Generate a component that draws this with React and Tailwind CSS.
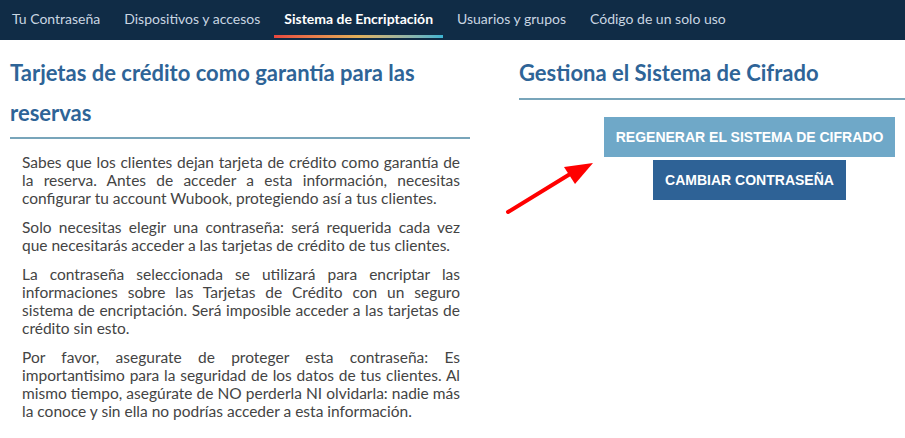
export default function App() {
    const tabs = ["Tu Contraseña", "Dispositivos y accesos", "Sistema de Encriptación", "Usuarios y grupos", "Código de un solo uso"];

    return (
        <div className="w-[905px] h-[438px] bg-white overflow-hidden font-['Lato',sans-serif]">
            {/* tabs */}
            <nav className="h-10 bg-[#102c46] flex items-stretch">
                {tabs.map((tab) => (
                    <div key={tab} className="relative px-[10px] mx-[2px] pb-[3px] flex items-center">
                        <span className={tab === "Sistema de Encriptación" ? "text-[14px] text-white font-bold" : "text-[14px] text-[#c9d6e2]"}>
                            {tab}
                        </span>
                        {tab === "Sistema de Encriptación" && (
                            <span className="absolute left-0 right-0 bottom-[2px] h-[3px] bg-gradient-to-r from-[#e8463f] via-[#e0b05a] to-[#3ab4d2]" />
                        )}
                    </div>
                ))}
            </nav>

            <div className="flex">
                {/* left column */}
                <div className="w-[460px] ml-[10px]">
                    <h2 className="text-[22px] leading-[40px] text-[#2e6497] font-bold pt-[13px] pb-[4px] border-b-2 border-[#78a5ba]">
                        Tarjetas de crédito como garantía para las reservas
                    </h2>
                    <div className="pl-3 pr-[10px] pt-[14px] text-[15.5px] leading-[18px] text-[#444] text-justify">
                        <p className="mb-[11px]">
                            Sabes que los clientes dejan tarjeta de crédito como garantía de la reserva. Antes de acceder a esta información, necesitas configurar tu account Wubook, protegiendo así a tus clientes.
                        </p>
                        <p className="mb-[11px]">
                            Solo necesitas elegir una contraseña: será requerida cada vez que necesitarás acceder a las tarjetas de crédito de tus clientes.
                        </p>
                        <p className="mb-[11px]">
                            La contraseña seleccionada se utilizará para encriptar las informaciones sobre las Tarjetas de Crédito con un seguro sistema de encriptación. Será imposible acceder a las tarjetas de crédito sin esto.
                        </p>
                        <p>
                            Por favor, asegurate de proteger esta contraseña: Es importantisimo para la seguridad de los datos de tus clientes. Al mismo tiempo, asegúrate de NO perderla NI olvidarla: nadie más la conoce y sin ella no podrías acceder a esta información.
                        </p>
                    </div>
                </div>

                {/* right column */}
                <div className="relative flex-1 ml-[49px]">
                    <h2 className="text-[22px] leading-[40px] text-[#2e6497] font-bold pt-[13px] pb-[5px] border-b-2 border-[#78a5ba]">
                        Gestiona el Sistema de Cifrado
                    </h2>
                    <div className="flex flex-col items-center pl-[85px] pr-[10px] pt-[17px] gap-[3px] font-['Liberation_Sans',Arial,sans-serif]">
                        <button className="w-full h-10 bg-[#6fa8c8] text-white font-bold text-[14px] uppercase">
                            Regenerar el sistema de cifrado
                        </button>
                        <button className="w-[193px] h-10 bg-[#2e6296] text-white font-bold text-[14px] uppercase">
                            Cambiar contraseña
                        </button>
                    </div>
                    <svg className="absolute left-[-16px] top-[118px]" width="95" height="60" viewBox="0 0 95 60">
                        <line x1="5" y1="54" x2="72" y2="13" stroke="#f00" strokeWidth="4" strokeLinecap="round" />
                        <polygon points="90,5 61,9 72,26" fill="#f00" />
                    </svg>
                </div>
            </div>
        </div>
    );
}
